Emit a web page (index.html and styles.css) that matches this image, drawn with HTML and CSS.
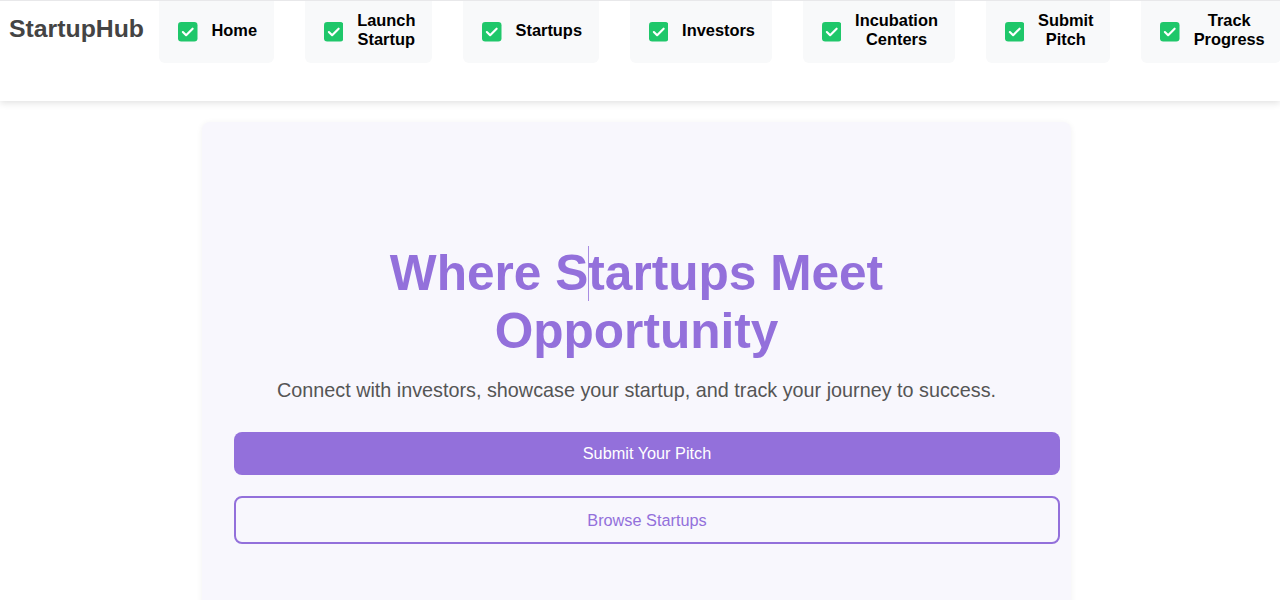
FILE: index.html
```html
<!DOCTYPE html>
<html lang="en">
<head>
<meta charset="utf-8">
<title>StartupHub</title>
<link rel="stylesheet" href="styles.css">
</head>
<body>
<header class="header">
  <div class="logo">StartupHub</div>
  <nav class="nav">
    <a class="nav-item" href="#"><svg class="check" viewBox="0 0 18 18"><rect width="18" height="18" rx="3" fill="#1fc76a"/><path d="M4.5 9.3l3 2.9 6-6" fill="none" stroke="#fff" stroke-width="2" stroke-linecap="round" stroke-linejoin="round"/></svg><span class="nav-label">Home</span></a>
    <a class="nav-item" href="#"><svg class="check" viewBox="0 0 18 18"><rect width="18" height="18" rx="3" fill="#1fc76a"/><path d="M4.5 9.3l3 2.9 6-6" fill="none" stroke="#fff" stroke-width="2" stroke-linecap="round" stroke-linejoin="round"/></svg><span class="nav-label">Launch<br>Startup</span></a>
    <a class="nav-item" href="#"><svg class="check" viewBox="0 0 18 18"><rect width="18" height="18" rx="3" fill="#1fc76a"/><path d="M4.5 9.3l3 2.9 6-6" fill="none" stroke="#fff" stroke-width="2" stroke-linecap="round" stroke-linejoin="round"/></svg><span class="nav-label">Startups</span></a>
    <a class="nav-item" href="#"><svg class="check" viewBox="0 0 18 18"><rect width="18" height="18" rx="3" fill="#1fc76a"/><path d="M4.5 9.3l3 2.9 6-6" fill="none" stroke="#fff" stroke-width="2" stroke-linecap="round" stroke-linejoin="round"/></svg><span class="nav-label">Investors</span></a>
    <a class="nav-item" href="#"><svg class="check" viewBox="0 0 18 18"><rect width="18" height="18" rx="3" fill="#1fc76a"/><path d="M4.5 9.3l3 2.9 6-6" fill="none" stroke="#fff" stroke-width="2" stroke-linecap="round" stroke-linejoin="round"/></svg><span class="nav-label">Incubation<br>Centers</span></a>
    <a class="nav-item" href="#"><svg class="check" viewBox="0 0 18 18"><rect width="18" height="18" rx="3" fill="#1fc76a"/><path d="M4.5 9.3l3 2.9 6-6" fill="none" stroke="#fff" stroke-width="2" stroke-linecap="round" stroke-linejoin="round"/></svg><span class="nav-label">Submit<br>Pitch</span></a>
    <a class="nav-item" href="#"><svg class="check" viewBox="0 0 18 18"><rect width="18" height="18" rx="3" fill="#1fc76a"/><path d="M4.5 9.3l3 2.9 6-6" fill="none" stroke="#fff" stroke-width="2" stroke-linecap="round" stroke-linejoin="round"/></svg><span class="nav-label">Track<br>Progress</span></a>
  </nav>
</header>
<main class="main">
  <section class="hero">
    <h1 class="hero-title">Where S<span class="caret"></span>tartups Meet<br>Opportunity</h1>
    <p class="hero-sub">Connect with investors, showcase your startup, and track your journey to success.</p>
    <div class="actions">
      <button class="btn btn-primary">Submit Your Pitch</button>
      <button class="btn btn-outline">Browse Startups</button>
    </div>
  </section>
</main>
</body>
</html>
```
FILE: styles.css
```css
* { box-sizing: border-box; }
html, body { margin: 0; padding: 0; }
body {
  font-family: "Liberation Sans", Arial, sans-serif;
  background: #ffffff;
  overflow: hidden;
  height: 600px;
}
.header {
  display: flex;
  align-items: flex-start;
  height: 101px;
  border-top: 1px solid #e8e8ea;
  background: #fff;
  box-shadow: 0 2px 7px rgba(0, 0, 0, 0.12);
  padding-left: 9px;
  position: relative;
  z-index: 2;
  white-space: nowrap;
  overflow: hidden;
}
.logo {
  font-size: 24.8px;
  font-weight: bold;
  color: #444444;
  line-height: 56px;
  margin-right: 15px;
  flex: none;
}
.nav {
  display: flex;
  gap: 31px;
  flex: none;
}
.nav-item {
  display: flex;
  align-items: center;
  height: 62px;
  padding: 0 16.6px 4px 19px;
  background: #f8f9fa;
  border-radius: 0 0 6px 6px;
  text-decoration: none;
  color: #000;
  flex: none;
}
.check {
  width: 19.5px;
  height: 19.5px;
  flex: none;
  margin-right: 14px;
  position: relative;
  top: 2px;
}
.nav-label {
  font-size: 16.4px;
  font-weight: bold;
  line-height: 19px;
  text-align: center;
}
.main {
  display: flex;
  justify-content: flex-start;
  padding: 21px 0 0 202px;
}
.hero {
  width: 869px;
  min-height: 520px;
  background: #f8f7fd;
  border-radius: 8px;
  box-shadow: 0 1px 6px rgba(0, 0, 0, 0.06);
  padding: 122px 11px 40px 32px;
  text-align: center;
}
.hero-title {
  margin: 0 -11px 0 -32px;
  font-size: 49.6px;
  line-height: 58px;
  font-weight: bold;
  color: #9370db;
}
.caret {
  position: relative;
  display: inline-block;
  width: 0;
}
.caret::after {
  content: "";
  position: absolute;
  left: 0;
  top: -44px;
  width: 1px;
  height: 55px;
  background: #9370db;
  opacity: 0.8;
}
.hero-sub {
  margin: 19px -11px 0 -32px;
  font-size: 19.8px;
  line-height: 22px;
  color: #555555;
}
.actions {
  display: flex;
  flex-direction: column;
  gap: 21px;
  margin-top: 31px;
}
.btn {
  width: 100%;
  font-family: "Liberation Sans", Arial, sans-serif;
  font-size: 16.3px;
  border-radius: 8px;
  cursor: pointer;
}
.btn-primary {
  height: 43px;
  background: #9370db;
  color: #fff;
  border: none;
}
.btn-outline {
  height: 48px;
  background: transparent;
  color: #9370db;
  border: 2px solid #9370db;
}
```
